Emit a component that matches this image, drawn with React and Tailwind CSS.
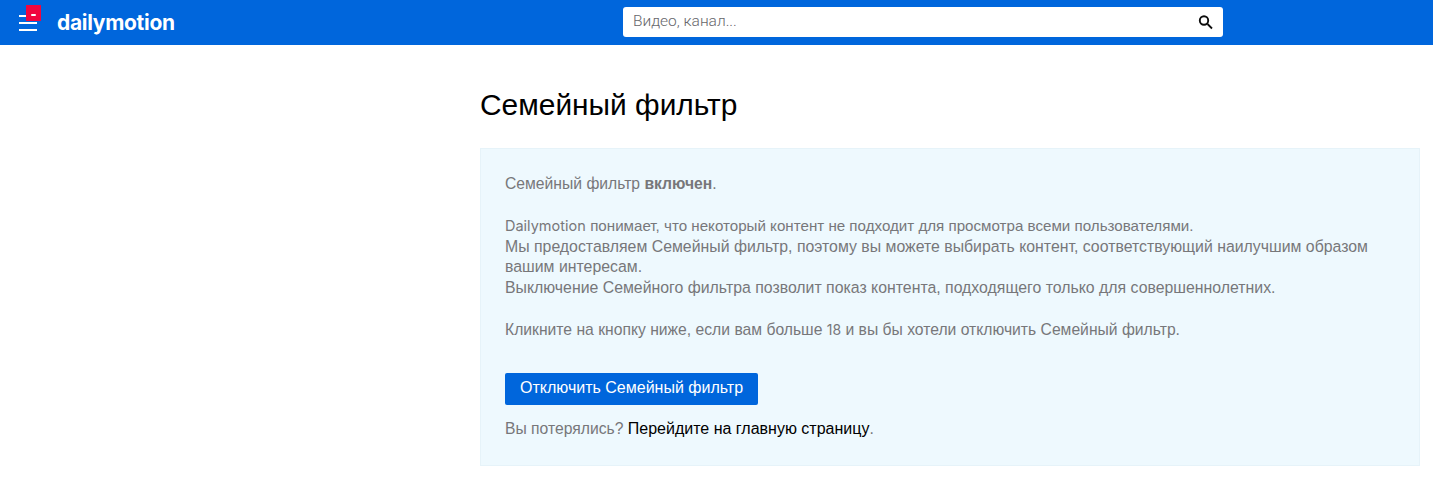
import React from 'react';

function Logo() {
  return (
    <div className="flex items-center">
      <div className="relative w-[20px] h-[45px] ml-[19px] mr-[18px]">
        <div className="absolute left-0 top-[15px] w-[18px] flex flex-col gap-[5px]">
          <span className="h-[2px] w-[8px] bg-white"></span>
          <span className="h-[2px] bg-white"></span>
          <span className="h-[2px] bg-white"></span>
        </div>
        <div className="absolute left-[7px] top-[5px] w-[15px] h-[16px] bg-[#f0063f]">
          <div className="absolute left-[5px] top-[9px] w-[5px] h-[2px] bg-white rounded-sm"></div>
        </div>
      </div>
      <span className="font-['Inter',sans-serif] text-[21px] font-bold tracking-[-0.3px] text-white leading-none">
        dailymotion
      </span>
    </div>
  );
}

export default function App() {
  return (
    <div className="min-h-[478px] bg-white font-['Liberation_Sans',Arial,sans-serif]">
      {/* Header */}
      <header className="h-[45px] bg-[#0066dc] flex items-center relative">
        <Logo />
        <div className="absolute left-[623px] top-[7px] w-[600px] h-[30px] bg-white rounded-[3px] flex items-center justify-between pl-[10px] pr-[9px]">
          <span className="font-['Roboto',sans-serif] text-[15.5px] font-light text-[#66666a]">Видео, канал...</span>
          <svg width="16" height="16" viewBox="0 0 16 16" fill="none" stroke="#0d0d0d">
            <circle cx="6" cy="6.5" r="4.2" strokeWidth="1.9" />
            <path d="M9.5 10L14 14.5" strokeWidth="1.8" />
          </svg>
        </div>
      </header>

      {/* Content */}
      <main className="pl-[480px] pr-[13px]">
        <h1 className="pt-[41px] pb-[25px] text-[29.9px] leading-[37px] font-normal text-black">Семейный фильтр</h1>

        <section className="bg-[#eef9fe] border border-[#e6f3f9] px-[24px] pt-[25px] pb-[25px] text-[15.7px] leading-[20.8px] text-[#77777a]">
          <p>
            Семейный фильтр <strong className="font-bold">включен</strong>.
          </p>
          <p className="mt-[21px] text-[15.85px]">
            <span className="font-['Inter',sans-serif] text-[14.5px]">Dailymotion</span>{' '}
            <span className="text-[15.15px]">понимает, что некоторый контент не подходит для просмотра всеми пользователями.</span>
            <br />
            Мы предоставляем Семейный фильтр, поэтому вы можете выбирать контент, соответствующий наилучшим образом вашим интересам.
            <br />
            Выключение Семейного фильтра позволит показ контента, подходящего только для совершеннолетних.
          </p>
          <p className="mt-[21px]">
            Кликните на кнопку ниже, если вам больше <span className="font-['Inter',sans-serif] text-[14px]">18</span> и вы бы хотели отключить Семейный фильтр.
          </p>

          <button className="block mt-[32px] w-[253px] h-[32px] bg-[#0066dc] rounded-[2px] text-white text-[16px]">
            Отключить Семейный фильтр
          </button>

          <p className="mt-[14px]">
            Вы потерялись? <a className="text-black text-[16px]">Перейдите на главную страницу</a>.
          </p>
        </section>
      </main>
    </div>
  );
}
